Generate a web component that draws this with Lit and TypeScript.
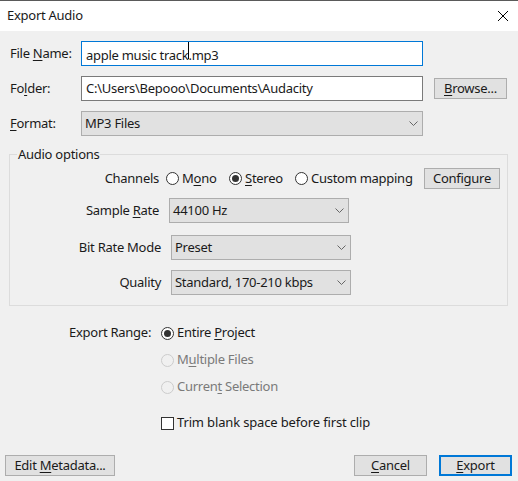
import { LitElement, html, css } from 'lit';
import { customElement } from 'lit/decorators.js';

@customElement('app-root')
export class AppRoot extends LitElement {
  static styles = css`
    :host {
      background: #f0f0f0;
      color: #1a1a1a;
      display: block;
      font-family: 'Noto Sans', 'Open Sans', sans-serif;
      font-size: 13px;
      height: 481px;
      letter-spacing: -0.27px;
      line-height: 18px;
      overflow: hidden;
      width: 518px;
    }

    u {
      text-underline-offset: 2px;
    }

    /* Noto sits low in its line box, lift the text a pixel off the row centre */
    .titlebar > span,
    .file-grid > span,
    .field > span,
    .select > span,
    .btn > span,
    .label,
    .choice > span:last-child,
    .range > span {
      margin-bottom: 2px;
    }

    .titlebar {
      align-items: center;
      background: #ffffff;
      border-top: 1px solid #5a5a5a;
      display: flex;
      height: 30px;
      justify-content: space-between;
      padding: 0 10px 0 7px;
    }

    .close {
      display: block;
      height: 10px;
      width: 10px;
    }

    .file-grid {
      align-items: center;
      display: grid;
      grid-template-columns: 71px 342px 84px;
      margin: 10px 0 0 10px;
      row-gap: 10px;
    }

    .field {
      align-items: center;
      background: #ffffff;
      border: 1px solid #7a7a7a;
      box-sizing: border-box;
      display: flex;
      height: 25px;
      padding: 0 4px;
    }

    .field.focused {
      border-color: #0078d7;
    }

    .caret-anchor {
      display: inline-block;
      height: 18px;
      position: relative;
      width: 0;
    }

    .caret {
      background: #000000;
      height: 17px;
      left: 0;
      position: absolute;
      top: 0;
      width: 1px;
    }

    .btn {
      align-items: center;
      background: #e1e1e1;
      border: 1px solid #adadad;
      box-sizing: border-box;
      display: flex;
      height: 21px;
      justify-content: center;
    }

    .browse {
      margin-left: 11px;
      width: 73px;
    }

    .select {
      align-items: center;
      background: #e1e1e1;
      border: 1px solid #adadad;
      box-sizing: border-box;
      display: flex;
      height: 25px;
      justify-content: space-between;
      padding: 0 4px 0 3px;
      width: 180px;
    }

    .select.full {
      width: 342px;
    }

    .chevron {
      display: block;
      flex: none;
      height: 5px;
      width: 9px;
    }

    .group {
      border: 1px solid #dcdcdc;
      box-sizing: border-box;
      height: 161px;
      margin: 9px 10px 0 9px;
      min-width: 0;
      padding: 5px 0 0;
    }

    .group legend {
      margin-left: 7px;
      padding: 0 1px;
    }

    .row {
      align-items: center;
      display: flex;
    }

    .channels {
      height: 21px;
    }

    .channels .label {
      margin-right: 7px;
      width: 149px;
    }

    .label {
      flex: none;
      text-align: right;
      width: 149px;
    }

    .sample {
      margin-top: 9px;
    }

    .sample .label {
      margin-right: 10px;
    }

    .bitrate {
      margin-top: 12px;
    }

    .quality {
      margin-top: 10px;
    }

    .bitrate .label,
    .quality .label {
      margin-right: 10px;
      width: 151px;
    }

    .choice {
      align-items: center;
      display: flex;
      flex: none;
    }

    .radio {
      background: #ffffff;
      border: 1px solid #333333;
      border-radius: 50%;
      box-sizing: border-box;
      display: block;
      flex: none;
      height: 13px;
      margin-right: 3px;
      position: relative;
      width: 13px;
    }

    .radio.on::after {
      background: #333333;
      border-radius: 50%;
      content: '';
      height: 7px;
      left: 2px;
      position: absolute;
      top: 2px;
      width: 7px;
    }

    .choice.disabled {
      color: #7a7a7a;
    }

    .choice.disabled .radio {
      background: #f0f0f0;
      border-color: #cccccc;
    }

    .mono {
      width: 63px;
    }

    .stereo {
      width: 66px;
    }

    .custom {
      width: 129px;
    }

    .configure {
      width: 76px;
    }

    .range {
      align-items: center;
      display: grid;
      grid-template-columns: 92px 1fr;
      margin: 17px 0 0 69px;
      row-gap: 7px;
    }

    .range .choice {
      grid-column: 2;
    }

    .trim {
      letter-spacing: -0.15px;
      margin-top: 9px;
    }

    .check {
      background: #ffffff;
      border: 1px solid #333333;
      box-sizing: border-box;
      display: block;
      flex: none;
      height: 13px;
      margin-right: 3px;
      width: 13px;
    }

    .footer {
      display: flex;
      margin: 22px 6px 0 5px;
    }

    .metadata {
      margin-right: auto;
      width: 110px;
    }

    .cancel {
      margin-right: 12px;
      width: 73px;
    }

    .export {
      border: 2px solid #0078d7;
      width: 73px;
    }
  `;

  chevron() {
    return html`<svg class="chevron" viewBox="0 0 9 5" fill="none" stroke="#666666" stroke-width="1">
      <path d="M.5.5l4 4 4-4" />
    </svg>`;
  }

  select(text: string, cls = '') {
    return html`<div class="select ${cls}"><span>${text}</span>${this.chevron()}</div>`;
  }

  render() {
    return html`
      <div class="titlebar">
        <span>Export Audio</span>
        <svg class="close" viewBox="0 0 10 10" fill="none" stroke="#000000" stroke-width="1">
          <path d="M0 0l10 10M10 0L0 10" />
        </svg>
      </div>

      <div class="file-grid">
        <span>File <u>N</u>ame:</span>
        <div class="field focused">
          <span>apple music track<span class="caret-anchor"><span class="caret"></span></span>.mp3</span>
        </div>
        <span></span>

        <span>Fo<u>l</u>der:</span>
        <div class="field"><span>C:\\Users\\Bepooo\\Documents\\Audacity</span></div>
        <div class="btn browse"><span><u>B</u>rowse...</span></div>

        <span><u>F</u>ormat:</span>
        ${this.select('MP3 Files', 'full')}
        <span></span>
      </div>

      <fieldset class="group">
        <legend>Audio options</legend>
        <div class="row channels">
          <span class="label">Channels</span>
          <label class="choice mono"><span class="radio"></span><span>M<u>o</u>no</span></label>
          <label class="choice stereo"><span class="radio on"></span><span><u>S</u>tereo</span></label>
          <label class="choice custom"><span class="radio"></span><span>Custom mappin<u>g</u></span></label>
          <div class="btn configure"><span>Configure</span></div>
        </div>
        <div class="row sample">
          <span class="label">Sample <u>R</u>ate</span>
          ${this.select('44100 Hz')}
        </div>
        <div class="row bitrate">
          <span class="label">Bit Rate Mode</span>
          ${this.select('Preset')}
        </div>
        <div class="row quality">
          <span class="label">Quality</span>
          ${this.select('Standard, 170-210 kbps')}
        </div>
      </fieldset>

      <div class="range">
        <span>Export Range:</span>
        <label class="choice"><span class="radio on"></span><span>Entire <u>P</u>roject</span></label>
        <label class="choice disabled"><span class="radio"></span><span>M<u>u</u>ltiple Files</span></label>
        <label class="choice disabled"><span class="radio"></span><span>Curren<u>t</u> Selection</span></label>
        <label class="choice trim"><span class="check"></span><span>Trim blank space before first clip</span></label>
      </div>

      <div class="footer">
        <div class="btn metadata"><span>Edit <u>M</u>etadata...</span></div>
        <div class="btn cancel"><span><u>C</u>ancel</span></div>
        <div class="btn export"><span><u>E</u>xport</span></div>
      </div>
    `;
  }
}
